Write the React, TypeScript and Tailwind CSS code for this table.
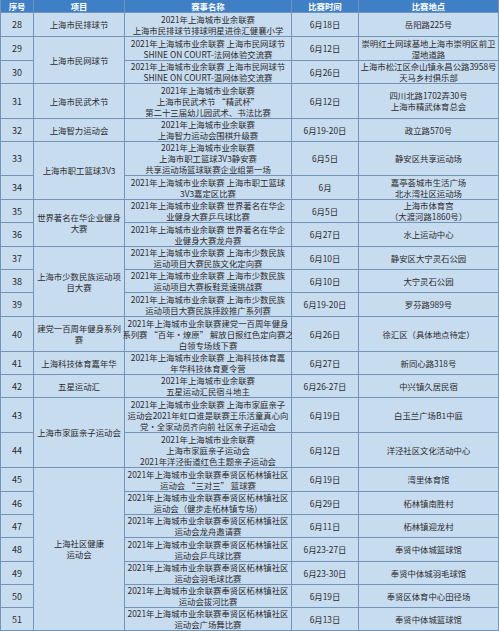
import React from "react";

type Row = {
  n: number;
  proj?: { lines: string[]; span: string };
  name: string[];
  date: string;
  place: string[];
};

const L = "2021年上海城市业余联赛";
const F = "2021年上海城市业余联赛奉贤区柘林镇社区";

const rows: Row[] = [
  { n: 28, proj: { lines: ["上海市民排球节"], span: "" }, name: [L, "上海市民排球节排球明星进徐汇健襄小学"], date: "6月18日", place: ["岳阳路225号"] },
  { n: 29, proj: { lines: ["上海市民网球节"], span: "row-span-2" }, name: [L + " 上海市民网球节", "SHINE ON COURT-法网体验交流赛"], date: "6月12日", place: ["崇明红土网球基地上海市崇明区前卫", "湿地道路"] },
  { n: 30, name: [L + " 上海市民网球节", "SHINE ON COURT-温网体验交流赛"], date: "6月26日", place: ["上海市松江区佘山镇永昌公路3958号", "天马乡村俱乐部"] },
  { n: 31, proj: { lines: ["上海市民武术节"], span: "" }, name: [L, "上海市民武术节 \u201c精武杯\u201d", "第二十三届幼儿园武术、书法比赛"], date: "6月12日", place: ["四川北路1702弄30号", "上海市精武体育总会"] },
  { n: 32, proj: { lines: ["上海智力运动会"], span: "" }, name: [L, "上海智力运动会围棋升级赛"], date: "6月19-20日", place: ["政立路570号"] },
  { n: 33, proj: { lines: ["上海市职工篮球3V3"], span: "row-span-2" }, name: [L, "上海市职工篮球3V3静安赛", "共享运动场篮球联赛企业组第一场"], date: "6月5日", place: ["静安区共享运动场"] },
  { n: 34, name: [L + " 上海市职工篮球", "3V3嘉定区比赛"], date: "6月", place: ["嘉亭荟城市生活广场", "北水湾社区运动场"] },
  { n: 35, proj: { lines: ["世界著名在华企业健身", "大赛"], span: "row-span-2" }, name: [L + " 世界著名在华企", "业健身大赛乒乓球比赛"], date: "6月5日", place: ["上海市体育宫", "（大渡河路1860号）"] },
  { n: 36, name: [L + " 世界著名在华企", "业健身大赛龙舟赛"], date: "6月27日", place: ["水上运动中心"] },
  { n: 37, proj: { lines: ["上海市少数民族运动项", "目大赛"], span: "row-span-3" }, name: [L + " 上海市少数民族", "运动项目大赛民族文化定向赛"], date: "6月10日", place: ["静安区大宁灵石公园"] },
  { n: 38, name: [L + " 上海市少数民族", "运动项目大赛板鞋竞速挑战赛"], date: "6月10日", place: ["大宁灵石公园"] },
  { n: 39, name: [L + " 上海市少数民族", "运动项目大赛民族摔跤推广系列赛"], date: "6月19-20日", place: ["罗芬路989号"] },
  { n: 40, proj: { lines: ["建党一百周年健身系列", "赛"], span: "" }, name: [L + "建党一百周年健身", "系列赛 \u201c百年•燎原\u201d 解放日报红色定向赛之", "白领专场线下赛"], date: "6月26日", place: ["徐汇区（具体地点待定）"] },
  { n: 41, proj: { lines: ["上海科技体育嘉年华"], span: "" }, name: [L + " 上海科技体育嘉", "年华科技体育夏令营"], date: "6月27日", place: ["新同心路318号"] },
  { n: 42, proj: { lines: ["五星运动汇"], span: "" }, name: [L, "五星运动汇民宿斗地主"], date: "6月26-27日", place: ["中兴镇久居民宿"] },
  { n: 43, proj: { lines: ["上海市家庭亲子运动会"], span: "row-span-2" }, name: [L + " 上海市家庭亲子", "运动会2021年虹口谁是联赛王乐活童真心向", "党·全家动员齐向前 社区亲子运动会"], date: "6月19日", place: ["白玉兰广场B1中庭"] },
  { n: 44, name: [L, "上海市家庭亲子运动会", "2021年洋泾街道红色主题亲子运动会"], date: "6月12日", place: ["洋泾社区文化活动中心"] },
  { n: 45, proj: { lines: ["上海社区健康", "运动会"], span: "row-span-7" }, name: [F, "运动会 \u201c三对三\u201d 篮球赛"], date: "6月19日", place: ["湾里体育馆"] },
  { n: 46, name: [F, "运动会（健步走柘林镇专场）"], date: "6月29日", place: ["柘林镇南胜村"] },
  { n: 47, name: [F, "运动会龙舟邀请赛"], date: "6月11日", place: ["柘林镇迎龙村"] },
  { n: 48, name: [F, "运动会乒乓球比赛"], date: "6月23-27日", place: ["奉贤中体城篮球馆"] },
  { n: 49, name: [F, "运动会羽毛球比赛"], date: "6月23-30日", place: ["奉贤中体城羽毛球馆"] },
  { n: 50, name: [F, "运动会拔河比赛"], date: "6月19日", place: ["奉贤区体育中心田径场"] },
  { n: 51, name: [F, "运动会广场舞比赛"], date: "6月13日", place: ["奉贤中体城篮球馆"] },
];

function Cell({ lines, className = "" }: { lines: string[]; className?: string }) {
  return (
    <div className={"flex flex-col items-center justify-center bg-[#c8dcf0] text-center whitespace-nowrap " + className}>
      {lines.map((l, i) => (
        <span key={i} className="block">
          {l}
        </span>
      ))}
    </div>
  );
}

export default function App() {
  return (
    <div
      className="w-[499px] h-[631px] overflow-hidden bg-white"
      style={{ fontFamily: '"Noto Sans CJK SC", "Liberation Sans", sans-serif' }}
    >
      <div className="grid grid-cols-[32px_90px_166px_66px_139px] grid-rows-[12px_23px_23px_22px_34px_22px_33px_23px_22px_23px_22px_22px_23px_34px_22px_22px_34px_34px_23px_22px_22px_23px_22px_22px_22px] gap-px bg-[#7393b8] px-px pb-px text-[8.4px] leading-[11px] text-[#2b2b2b]">
        {["序号", "项目", "赛事名称", "比赛时间", "比赛地点"].map((h) => (
          <div key={h} className="flex items-center justify-center bg-[#3f7fc5] font-bold text-white">
            {h}
          </div>
        ))}
        {rows.map((r) => (
          <React.Fragment key={r.n}>
            <Cell lines={[String(r.n)]} className="text-[9px]" />
            {r.proj && <Cell lines={r.proj.lines} className={r.proj.span} />}
            <Cell lines={r.name} />
            <Cell lines={[r.date]} />
            <Cell lines={r.place} />
          </React.Fragment>
        ))}
      </div>
    </div>
  );
}
